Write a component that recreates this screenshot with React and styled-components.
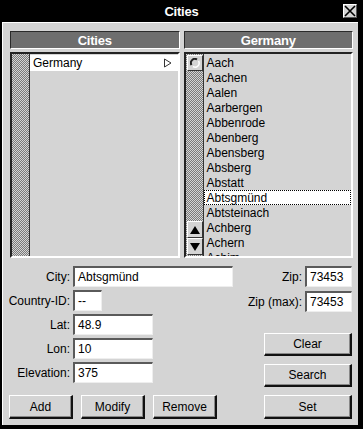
import React from 'react'
import styled, { createGlobalStyle } from 'styled-components'

const GlobalStyle = createGlobalStyle`
  html, body {
    margin: 0;
    padding: 0;
    background: #000;
  }
  body {
    font-family: "Liberation Sans", Arial, sans-serif;
    font-size: 12px;
    color: #000;
  }
  * { box-sizing: border-box; }
`

const Frame = styled.div`
  width: 363px;
  height: 429px;
  background: #000;
  display: flex;
  flex-direction: column;
`

const TitleBar = styled.div`
  height: 22px;
  display: grid;
  grid-template-columns: 1fr auto 1fr;
  align-items: center;
  color: #fff;
  font-weight: bold;
  font-size: 13px;
  letter-spacing: -0.2px;
`

const Title = styled.span`
  grid-column: 2;
`

const CloseButton = styled.div`
  grid-column: 3;
  justify-self: end;
  margin-right: 6px;
  width: 14px;
  height: 14px;
  background: #d4d4d4;
  border: 1px solid;
  border-color: #fff #555 #555 #fff;
  display: flex;
  align-items: center;
  justify-content: center;
`

const Body = styled.div`
  flex: 1;
  margin: 0 5px 4px 2px;
  background: #d4d4d4;
  border-top: 1px solid #fff;
  border-left: 1px solid #fff;
  padding: 8px 5px 6px 7px;
  display: flex;
  flex-direction: column;
`

const Panels = styled.div`
  height: 227px;
  display: grid;
  grid-template-columns: 1fr 1fr;
  gap: 4px;
`

const Panel = styled.div`
  display: flex;
  flex-direction: column;
  gap: 3px;
  min-height: 0;
`

const PanelHeader = styled.div`
  height: 18px;
  background: #6e6e6e;
  border: 1px solid;
  border-color: #2a2a2a #fff #fff #2a2a2a;
  color: #fff;
  font-weight: bold;
  font-size: 13px;
  letter-spacing: -0.2px;
  display: flex;
  align-items: center;
  justify-content: center;
`

const ListBox = styled.div`
  flex: 1;
  min-height: 0;
  display: flex;
  border: 2px solid;
  border-color: #222 #fff #fff #222;
`

const Trough = styled.div`
  width: 18px;
  flex-shrink: 0;
  border-right: 1px solid #333;
  background: repeating-conic-gradient(#7a7a7a 0% 25%, #d4d4d4 0% 50%) 0 0 / 2px 2px;
  display: flex;
  flex-direction: column;
  justify-content: space-between;
  padding: 1px 0 1px 1px;
`

const ScrollButton = styled.div`
  width: 16px;
  height: ${p => p.$h || 16}px;
  background: #d4d4d4;
  border: 1px solid;
  border-color: #fff #333 #333 #fff;
  display: flex;
  align-items: center;
  justify-content: center;
`

const Arrows = styled.div`
  display: flex;
  flex-direction: column;
`

const Items = styled.div`
  flex: 1;
  overflow: hidden;
  padding-top: 1px;
`

const Row = styled.div`
  height: ${p => p.$h || 15}px;
  line-height: ${p => (p.$h || 15) - 1}px;
  padding-left: 3px;
  padding-right: 6px;
  white-space: nowrap;
  display: flex;
  align-items: center;
  justify-content: space-between;
  background: ${p => (p.$selected || p.$active ? '#fff' : 'transparent')};
  outline: ${p => (p.$selected ? '1px dotted #000' : 'none')};
  outline-offset: -1px;
`

const Form = styled.div`
  margin-top: 8px;
  flex: 1;
  display: flex;
  justify-content: space-between;
`

const LeftCol = styled.div`
  display: flex;
  flex-direction: column;
  margin-left: -4px;
`

const Fields = styled.div`
  display: flex;
  flex-direction: column;
  gap: 3px;
`

const FieldRow = styled.div`
  display: grid;
  grid-template-columns: 64px auto;
  column-gap: 3px;
  align-items: center;
`

const Label = styled.label`
  text-align: right;
  white-space: nowrap;
`

const Input = styled.div`
  width: ${p => p.$w}px;
  height: 21px;
  background: #fff;
  border-style: solid;
  border-width: 2px 1px 1px 2px;
  border-color: #5a5a5a #eee #eee #5a5a5a;
  padding-left: 3px;
  display: flex;
  align-items: center;
  white-space: nowrap;
  overflow: hidden;
`

const ButtonRow = styled.div`
  margin-top: 12px;
  margin-left: 3px;
  display: flex;
  gap: 8px;
`

const Button = styled.div`
  width: ${p => p.$w || 64}px;
  height: ${p => p.$h || 24}px;
  margin-top: ${p => p.$mt || 0}px;
  background: #d4d4d4;
  border-style: solid;
  border-width: 1px 2px 2px 1px;
  border-color: #fff #111 #111 #fff;
  box-shadow: inset -1px -1px 0 #888;
  display: flex;
  align-items: center;
  justify-content: center;
  font-size: 12px;
`

const RightCol = styled.div`
  display: flex;
  flex-direction: column;
  align-items: flex-end;
  margin-right: 1px;
`

const ZipRow = styled.div`
  display: flex;
  align-items: center;
  gap: 3px;
  margin-bottom: ${p => p.$mb || 0}px;
`

const CloseIcon = () => (
  <svg width="12" height="12" viewBox="0 0 12 12">
    <path d="M1 1 L11 11 M11 1 L1 11" stroke="#000" strokeWidth="1.6" />
  </svg>
)

const Pointer = () => (
  <svg width="9" height="10" viewBox="0 0 9 10">
    <path d="M1.5 1 L1.5 9 L8 5 Z" fill="#fff" stroke="#333" strokeWidth="1" />
  </svg>
)

const ThumbIcon = () => (
  <svg width="10" height="10" viewBox="0 0 10 10">
    <circle cx="5" cy="5" r="4" fill="#d4d4d4" />
    <path d="M1.5 7 A4 4 0 0 1 7 1.5" stroke="#222" strokeWidth="2" fill="none" />
    <path d="M8.5 3 A4 4 0 0 1 3 8.5" stroke="#fff" strokeWidth="1.5" fill="none" />
  </svg>
)

const Arrow = ({ down }) => (
  <svg width="10" height="10" viewBox="0 0 10 10">
    <path d={down ? 'M0 1 L10 1 L5 9 Z' : 'M0 9 L10 9 L5 1 Z'} fill="#000" />
  </svg>
)

const cities = [
  'Aach', 'Aachen', 'Aalen', 'Aarbergen', 'Abbenrode', 'Abenberg',
  'Abensberg', 'Absberg', 'Abstatt', 'Abtsgmünd', 'Abtsteinach',
  'Achberg', 'Achern', 'Achim',
]

const fields = [
  { label: 'City:', value: 'Abtsgmünd', w: 160 },
  { label: 'Country-ID:', value: '--', w: 29 },
  { label: 'Lat:', value: '48.9', w: 80 },
  { label: 'Lon:', value: '10', w: 80 },
  { label: 'Elevation:', value: '375', w: 80 },
]

export default function App() {
  const selected = 'Abtsgmünd'

  return (
    <Frame>
      <GlobalStyle />
      <TitleBar>
        <Title>Cities</Title>
        <CloseButton><CloseIcon /></CloseButton>
      </TitleBar>
      <Body>
        <Panels>
          <Panel>
            <PanelHeader>Cities</PanelHeader>
            <ListBox>
              <Trough />
              <Items>
                <Row $h={16} $active>
                  <span>Germany</span>
                  <Pointer />
                </Row>
              </Items>
            </ListBox>
          </Panel>
          <Panel>
            <PanelHeader>Germany</PanelHeader>
            <ListBox>
              <Trough>
                <ScrollButton><ThumbIcon /></ScrollButton>
                <Arrows>
                  <ScrollButton $h={17}><Arrow /></ScrollButton>
                  <ScrollButton $h={17}><Arrow down /></ScrollButton>
                </Arrows>
              </Trough>
              <Items>
                {cities.map(c => (
                  <Row key={c} $selected={c === selected}>{c}</Row>
                ))}
              </Items>
            </ListBox>
          </Panel>
        </Panels>

        <Form>
          <LeftCol>
            <Fields>
              {fields.map(f => (
                <FieldRow key={f.label}>
                  <Label>{f.label}</Label>
                  <Input $w={f.w}>{f.value}</Input>
                </FieldRow>
              ))}
            </Fields>
            <ButtonRow>
              <Button>Add</Button>
              <Button>Modify</Button>
              <Button>Remove</Button>
            </ButtonRow>
          </LeftCol>
          <RightCol>
            <ZipRow $mb={4}>
              <Label>Zip:</Label>
              <Input $w={47}>73453</Input>
            </ZipRow>
            <ZipRow>
              <Label>Zip (max):</Label>
              <Input $w={47}>73453</Input>
            </ZipRow>
            <Button $w={88} $h={23} $mt={21}>Clear</Button>
            <Button $w={88} $h={23} $mt={8}>Search</Button>
            <Button $w={88} $h={24} $mt={8}>Set</Button>
          </RightCol>
        </Form>
      </Body>
    </Frame>
  )
}
